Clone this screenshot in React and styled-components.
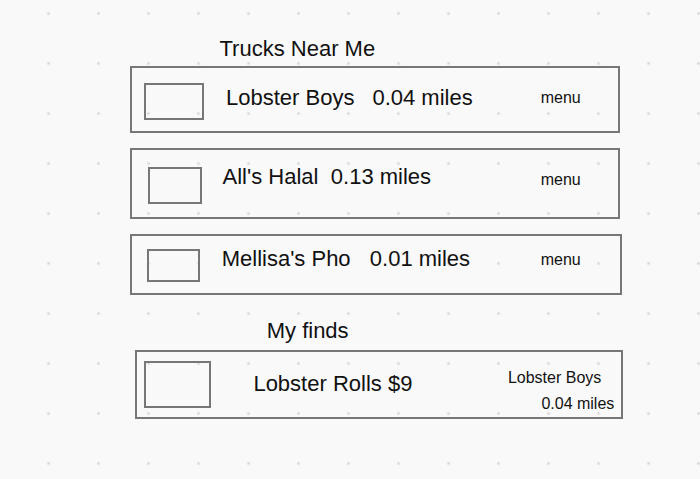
import styled, { createGlobalStyle } from "styled-components";

const GlobalStyle = createGlobalStyle`
  html, body {
    margin: 0;
    height: 100%;
  }

  body {
    background-color: #f9f9f9;
    background-image: radial-gradient(circle at center, #d4d4d4 1.1px, transparent 1.7px);
    background-size: 50px 50px;
    background-position: 23.5px -11.5px;
    font-family: "Liberation Sans", Arial, Helvetica, sans-serif;
    color: #111;
  }
`;

const Page = styled.main`
  box-sizing: border-box;
  min-height: 479px;
  padding: 36.5px 0 0 130px;
  display: flex;
  flex-direction: column;
  align-items: flex-start;
`;

const Heading = styled.h2`
  margin: ${(p) => p.$mt || 0}px 0 0 ${(p) => p.$indent}px;
  font-size: 22px;
  font-weight: 400;
  line-height: 24px;
`;

const Card = styled.div`
  box-sizing: border-box;
  width: ${(p) => p.$w}px;
  height: ${(p) => p.$h}px;
  margin: ${(p) => p.$mt}px 0 0 ${(p) => p.$ml || 0}px;
  padding: 0 ${(p) => p.$pr ?? 37.3}px 0 ${(p) => p.$pl}px;
  border: 2px solid #777;
  display: flex;
  align-items: center;
`;

const Thumb = styled.div`
  box-sizing: border-box;
  flex-shrink: 0;
  width: ${(p) => p.$w}px;
  height: ${(p) => p.$h}px;
  margin-top: ${(p) => p.$mt || 0}px;
  border: 2px solid #777;
`;

const Name = styled.div`
  margin: 0 0 ${(p) => p.$lift || 0}px ${(p) => p.$gap}px;
  font-size: 22px;
  line-height: 24px;
  white-space: nowrap;
`;

const Distance = styled.span`
  margin-left: ${(p) => p.$gap}px;
`;

const Menu = styled.div`
  margin: 0 0 ${(p) => p.$lift || 0}px auto;
  font-size: 16px;
  line-height: 18px;
`;

const Source = styled.div`
  margin-left: auto;
  align-self: flex-end;
  display: flex;
  flex-direction: column;
  align-items: flex-end;
  font-size: 16px;
  line-height: 26px;
  white-space: nowrap;

  & > span:first-child {
    margin-right: 13px;
  }
`;

const trucks = [
  { name: "Lobster Boys", dist: "0.04 miles", w: 490, h: 67, mt: 5.5, pl: 12, tw: 60, th: 37, tmt: 4, gap: 22, lift: 4, dgap: 18, mlift: 3 },
  { name: "All's Halal", dist: "0.13 miles", w: 490, h: 71, mt: 15, pl: 16, tw: 54, th: 37, tmt: 4, gap: 20.5, lift: 14, dgap: 12.4, mlift: 8 },
  { name: "Mellisa's Pho", dist: "0.01 miles", w: 492, h: 61, mt: 15, pl: 15, pr: 39.3, tw: 53, th: 33, tmt: 2, gap: 21.7, lift: 12, dgap: 19.2, mlift: 10 },
];

const App = () => {
  return (
    <>
      <GlobalStyle />
      <Page>
        <Heading $indent={89.5}>Trucks Near Me</Heading>
        {trucks.map((t) => (
          <Card key={t.name} $w={t.w} $h={t.h} $mt={t.mt} $pl={t.pl} $pr={t.pr}>
            <Thumb $w={t.tw} $h={t.th} $mt={t.tmt} />
            <Name $gap={t.gap} $lift={t.lift}>
              {t.name}
              <Distance $gap={t.dgap}>{t.dist}</Distance>
            </Name>
            <Menu $lift={t.mlift}>menu</Menu>
          </Card>
        ))}

        <Heading $indent={136.7} $mt={23.8}>My finds</Heading>
        <Card $w={488} $h={69} $mt={7.2} $ml={5} $pl={7} $pr={6.7}>
          <Thumb $w={67} $h={47} />
          <Name $gap={42.4}>Lobster Rolls $9</Name>
          <Source>
            <span>Lobster Boys</span>
            <span>0.04 miles</span>
          </Source>
        </Card>
      </Page>
    </>
  );
};

export default App;
